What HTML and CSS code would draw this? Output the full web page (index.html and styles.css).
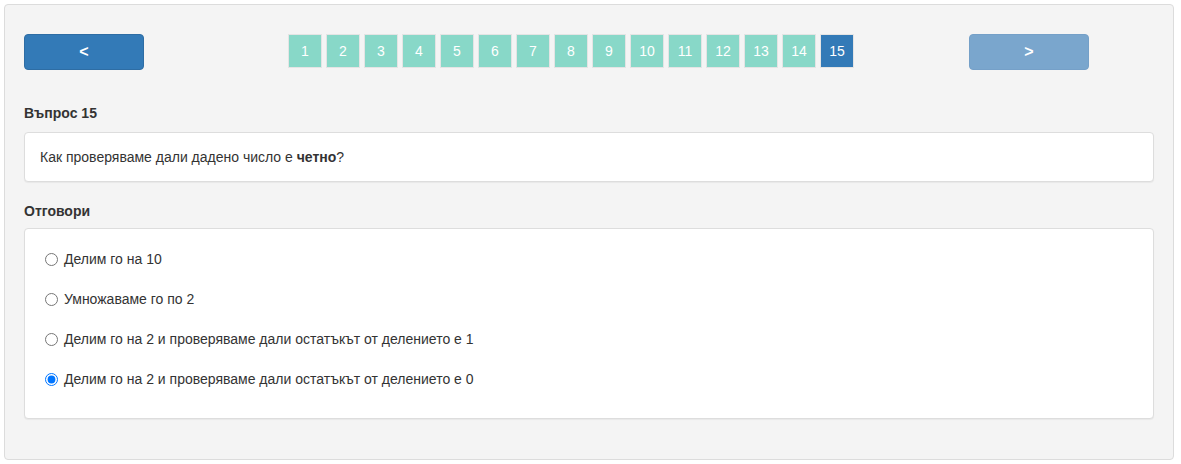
FILE: index.html
```html
<!DOCTYPE html>
<html lang="bg">
<head>
<meta charset="utf-8">
<title>Въпрос 15</title>
<link rel="stylesheet" href="styles.css">
</head>
<body>
<div class="panel">
  <div class="nav">
    <button class="nav-btn" type="button">&lt;</button>
    <div class="pages">
      <span class="page">1</span>
      <span class="page">2</span>
      <span class="page">3</span>
      <span class="page">4</span>
      <span class="page">5</span>
      <span class="page">6</span>
      <span class="page">7</span>
      <span class="page">8</span>
      <span class="page">9</span>
      <span class="page">10</span>
      <span class="page">11</span>
      <span class="page">12</span>
      <span class="page">13</span>
      <span class="page">14</span>
      <span class="page active">15</span>
    </div>
    <button class="nav-btn disabled" type="button">&gt;</button>
  </div>

  <h4 class="label">Въпрос 15</h4>
  <div class="box question"><span>Как проверяваме дали дадено число е <b>четно</b>?</span></div>

  <h4 class="label answers-label">Отговори</h4>
  <div class="box answers">
    <label class="answer"><input type="radio" name="a"> Делим го на 10</label>
    <label class="answer"><input type="radio" name="a"> Умножаваме го по 2</label>
    <label class="answer"><input type="radio" name="a"> Делим го на 2 и проверяваме дали остатъкът от делението е 1</label>
    <label class="answer"><input type="radio" name="a" checked> Делим го на 2 и проверяваме дали остатъкът от делението е 0</label>
  </div>
</div>
</body>
</html>
```

FILE: styles.css
```css
* { box-sizing: border-box; }
html, body { margin: 0; padding: 0; background: #fff; }
body {
  font-family: "Liberation Sans", Arial, sans-serif;
  font-size: 14px;
  color: #333;
  padding: 4px 7px 4px 4px;
}
.panel {
  background: #f4f4f4;
  border: 1px solid #dcdcdc;
  border-radius: 4px;
  padding: 29px 19px 40px 19px;
  height: 456px;
}
.nav {
  display: grid;
  grid-template-columns: 264px 681px 120px;
  align-items: start;
}
.nav-btn {
  width: 120px;
  height: 36px;
  background: #337ab7;
  border: 1px solid #2e6da4;
  border-radius: 4px;
  color: #fff;
  font-family: "Liberation Sans", Arial, sans-serif;
  font-size: 16px;
  font-weight: bold;
  padding: 0;
}
.nav-btn.disabled {
  background: #7aa6cd;
  border-color: #75a0c8;
}
.pages {
  display: flex;
  gap: 4px;
}
.page {
  width: 34px;
  height: 34px;
  background: #88d8c8;
  border: 1px solid #e4e4e4;
  color: #fff;
  font-size: 14px;
  display: flex;
  align-items: center;
  justify-content: center;
}
.page.active {
  background: #337ab7;
}
.label {
  margin: 35px 0 11px;
  font-size: 14px;
  font-weight: bold;
  color: #333;
  line-height: 16px;
}
.answers-label { margin-top: 21px; margin-bottom: 9px; }
.box {
  background: #fff;
  border: 1px solid #dddddd;
  border-radius: 4px;
  box-shadow: 0 1px 1px rgba(0,0,0,0.05);
}
.question {
  height: 50px;
  padding: 0 15px;
  display: flex;
  align-items: center;
}
.question b { font-weight: bold; }
.answers {
  padding: 20px 15px;
  height: 191px;
}
.answer {
  display: flex;
  align-items: center;
  height: 20px;
  margin-bottom: 20px;
  line-height: 20px;
}
.answer input {
  margin: 0 6px 0 5px;
  width: 13px;
  height: 13px;
}
```
